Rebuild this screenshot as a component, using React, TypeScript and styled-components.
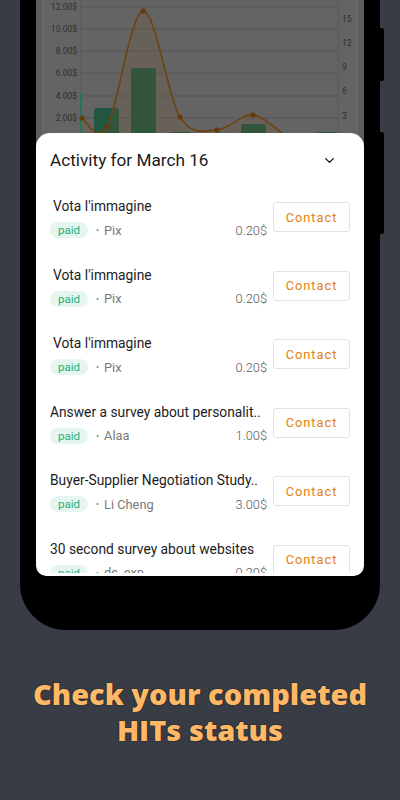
import styled, { createGlobalStyle } from 'styled-components';
import { ChevronDown } from 'lucide-react';

const GlobalStyle = createGlobalStyle`
  * {
    box-sizing: border-box;
  }
  body {
    margin: 0;
    background: #383c45;
    font-family: Roboto, "Noto Sans", sans-serif;
  }
`;

const Page = styled.div`
  width: 400px;
  height: 800px;
  overflow: hidden;
  display: flex;
  flex-direction: column;
  align-items: center;
  background: #383c45;
`;

const Phone = styled.div`
  position: relative;
  width: 360px;
  height: 630px;
  padding: 0 16px;
  background: #000;
  border-radius: 0 0 46px 46px;

  &::before,
  &::after {
    content: '';
    position: absolute;
    right: -4px;
    width: 4px;
    background: #000;
    border-radius: 0 2px 2px 0;
  }
  &::before {
    top: 28px;
    height: 53px;
  }
  &::after {
    top: 132px;
    height: 102px;
  }
`;

const Screen = styled.div`
  height: 576px;
  display: flex;
  flex-direction: column;
  background: #5e5e5e;
  border-radius: 0 0 10px 10px;
  overflow: hidden;
`;

const Chart = styled.svg`
  display: block;
  flex: none;
  width: 328px;
  height: 133px;
  overflow: visible;
`;

const Sheet = styled.section`
  flex: 1;
  min-height: 0;
  display: flex;
  flex-direction: column;
  padding: 0 14px 3px;
  background: #fff;
  border-radius: 14px 14px 10px 10px;
`;

const SheetHeader = styled.header`
  display: flex;
  align-items: center;
  justify-content: space-between;
  height: 22px;
  margin: 16px 0 12px;
  padding-right: 13px;
  color: #111;
`;

const SheetTitle = styled.h2`
  margin: 0;
  font-size: 17.2px;
  font-weight: 400;
  color: #1a1a1a;
`;

const List = styled.div`
  flex: 1;
  min-height: 0;
  overflow: hidden;
`;

const Row = styled.div`
  display: flex;
  align-items: center;
  gap: 6px;
  height: 68.5px;
`;

const Info = styled.div`
  flex: 1;
  min-width: 0;
  display: flex;
  flex-direction: column;
  gap: 6px;
`;

const HitTitle = styled.div<{ $inset?: boolean }>`
  font-size: 13.8px;
  line-height: 20px;
  color: #1c1c1c;
  white-space: nowrap;
  overflow: hidden;
  padding-left: ${(p) => (p.$inset ? '3px' : '0')};
`;

const Meta = styled.div`
  display: flex;
  align-items: center;
  height: 16px;
  font-size: 12.8px;
  color: #7a7a7a;
`;

const Status = styled.span`
  display: inline-flex;
  align-items: center;
  justify-content: center;
  width: 38px;
  height: 16px;
  border-radius: 8px;
  background: #e4f6ef;
  color: #1fae78;
  font-size: 11.5px;
`;

const Dot = styled.span`
  margin: 0 5px 0 8px;
  font-size: 9px;
  color: #888;
`;

const Amount = styled.span`
  margin-left: auto;
  color: #5a5a5a;
  font-size: 12.8px;
  font-weight: 300;
`;

const ContactButton = styled.button`
  flex: none;
  width: 77px;
  height: 30px;
  padding: 0;
  background: #fff;
  border: 1px solid #e2e2e2;
  border-radius: 3px;
  color: #e3820f;
  font-family: Roboto, "Noto Sans", sans-serif;
  font-size: 12.8px;
  letter-spacing: 1px;
`;

const Caption = styled.h1`
  margin: 46px 0 0;
  text-align: center;
  font-family: "Open Sans", "Noto Sans", sans-serif;
  font-weight: 800;
  font-size: 29px;
  line-height: 36px;
  color: #ffb866;
  text-shadow: 0 0 1px #14161c, 0 0 1px #14161c;
`;

const hits = [
  { title: "Vota l'immagine", who: 'Pix', amount: '0.20$', inset: true },
  { title: "Vota l'immagine", who: 'Pix', amount: '0.20$', inset: true },
  { title: "Vota l'immagine", who: 'Pix', amount: '0.20$', inset: true },
  { title: 'Answer a survey about personalit..', who: 'Alaa', amount: '1.00$' },
  { title: 'Buyer-Supplier Negotiation Study..', who: 'Li Cheng', amount: '3.00$' },
  { title: '30 second survey about websites', who: 'ds_exp', amount: '0.20$' },
];

const leftTicks = [
  { y: 7, label: '12.00$' },
  { y: 29, label: '10.00$' },
  { y: 51, label: '8.00$' },
  { y: 73, label: '6.00$' },
  { y: 96, label: '4.00$' },
  { y: 118, label: '2.00$' },
];

const rightTicks = [
  { y: 19, label: '15' },
  { y: 43, label: '12' },
  { y: 67, label: '9' },
  { y: 91, label: '6' },
  { y: 116, label: '3' },
];

const bars = [
  { x: 44, w: 2, top: 93 },
  { x: 58, w: 25, top: 108 },
  { x: 95, w: 25, top: 68 },
  { x: 133, w: 22, top: 132 },
  { x: 205, w: 25, top: 124 },
  { x: 280, w: 22, top: 132 },
];

const points: [number, number][] = [
  [46, 118],
  [71, 127],
  [107, 11],
  [144, 117],
  [181, 130],
  [217, 115],
  [254, 138],
  [290, 150],
];

// catmull-rom through the points, as the chart lib draws it
function smoothPath(pts: [number, number][]) {
  let d = `M${pts[0][0]},${pts[0][1]}`;
  for (let i = 0; i < pts.length - 1; i++) {
    const p0 = pts[i - 1] || pts[i];
    const p1 = pts[i];
    const p2 = pts[i + 1];
    const p3 = pts[i + 2] || p2;
    const c1x = p1[0] + (p2[0] - p0[0]) / 6;
    const c1y = p1[1] + (p2[1] - p0[1]) / 6;
    const c2x = p2[0] - (p3[0] - p1[0]) / 6;
    const c2y = p2[1] - (p3[1] - p1[1]) / 6;
    d += ` C${c1x},${c1y} ${c2x},${c2y} ${p2[0]},${p2[1]}`;
  }
  return d;
}

function EarningsChart() {
  const line = smoothPath(points);
  const last = points[points.length - 1];
  const area = `${line} L${last[0]},140 L${points[0][0]},140 Z`;
  return (
    <Chart viewBox="0 0 328 133">
      <rect x="7" y="-10" width="314" height="160" fill="#646464" stroke="#6f6f6f" />
      {leftTicks.map((t) => (
        <g key={t.label}>
          <line x1="45" x2="302" y1={t.y} y2={t.y} stroke="#555" strokeWidth="1" />
          <text
            x="41"
            y={t.y + 3}
            textAnchor="end"
            fontSize="8.5"
            fill="#2f2f2f"
            fontFamily="Roboto, sans-serif"
          >
            {t.label}
          </text>
        </g>
      ))}
      {rightTicks.map((t) => (
        <text
          key={t.label}
          x="306"
          y={t.y + 3}
          fontSize="8.5"
          fill="#2f2f2f"
          fontFamily="Roboto, sans-serif"
        >
          {t.label}
        </text>
      ))}
      <line x1="45" x2="45" y1="-10" y2="140" stroke="#595959" />
      <line x1="302" x2="302" y1="-10" y2="140" stroke="#595959" />
      {bars.map((b) => (
        <rect
          key={b.x}
          x={b.x}
          y={b.top}
          width={b.w}
          height={150 - b.top}
          rx={b.w > 4 ? 3 : 0}
          fill={b.w > 4 ? '#225641' : '#1f7757'}
        />
      ))}
      <path d={area} fill="rgba(130, 85, 40, 0.16)" />
      <path d={line} fill="none" stroke="#6e430f" strokeWidth="1.6" />
      {points.slice(0, 6).map(([x, y]) => (
        <circle key={x} cx={x} cy={y} r="2.6" fill="#653a0c" />
      ))}
    </Chart>
  );
}

export default function App() {
  return (
    <Page>
      <GlobalStyle />
      <Phone>
        <Screen>
          <EarningsChart />
          <Sheet>
            <SheetHeader>
              <SheetTitle>Activity for March 16</SheetTitle>
              <ChevronDown size={15} strokeWidth={2.2} />
            </SheetHeader>
            <List>
              {hits.map((hit, i) => (
                <Row key={i}>
                  <Info>
                    <HitTitle $inset={hit.inset}>{hit.title}</HitTitle>
                    <Meta>
                      <Status>paid</Status>
                      <Dot>•</Dot>
                      {hit.who}
                      <Amount>{hit.amount}</Amount>
                    </Meta>
                  </Info>
                  <ContactButton type="button">Contact</ContactButton>
                </Row>
              ))}
            </List>
          </Sheet>
        </Screen>
      </Phone>
      <Caption>
        Check your completed
        <br />
        HITs status
      </Caption>
    </Page>
  );
}
